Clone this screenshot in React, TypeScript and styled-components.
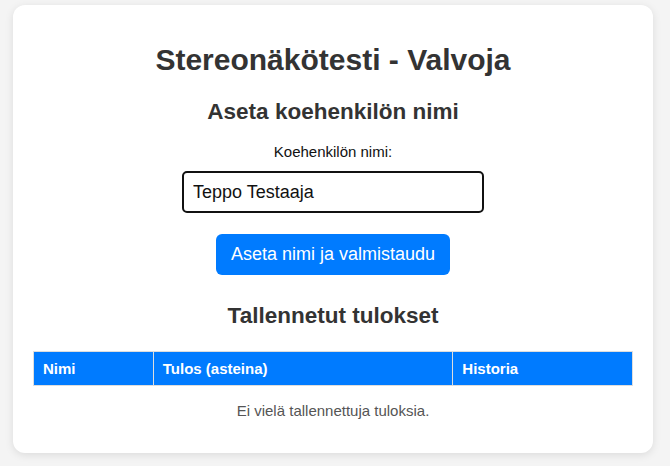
import styled, {createGlobalStyle} from 'styled-components';

const GlobalStyle = createGlobalStyle`
    html, body {
        margin: 0;
        padding: 0;
        background: #f4f4f4;
        font-family: "Liberation Sans", Arial, sans-serif;
        font-size: 15px;
        color: #333;
    }
`

const Page = styled.div`
    padding: 5px 0 13px 13px;
`

const Card = styled.div`
    width: 640px;
    box-sizing: border-box;
    padding: 20px;
    background: #fff;
    border-radius: 12px;
    box-shadow: 0 2px 8px rgba(0, 0, 0, 0.1);
    text-align: center;
`

const Title = styled.h1`
    font-size: 30px;
    margin: 18px 0 22px;
    color: #333;
`

const SubTitle = styled.h2<{$top?: number; $bottom?: number}>`
    font-size: 22.5px;
    margin: ${p => p.$top ?? 0}px 0 ${p => p.$bottom ?? 18}px;
    color: #333;
`

const Label = styled.label`
    display: block;
    font-size: 15px;
    color: #111;
    margin-bottom: 11px;
`

const NameInput = styled.input`
    display: block;
    margin: 0 auto 21px;
    width: 302px;
    height: 42px;
    box-sizing: border-box;
    padding: 0 9px;
    border: 2px solid #111;
    border-radius: 5px;
    font-family: "Liberation Sans", Arial, sans-serif;
    font-size: 18px;
    color: #111;
    outline: none;
    caret-color: #000;
`

const PrimaryButton = styled.button`
    width: 234px;
    height: 41px;
    border: none;
    border-radius: 6px;
    background: #007bff;
    color: #fff;
    font-family: "Liberation Sans", Arial, sans-serif;
    font-size: 18px;
    cursor: pointer;
`

const ResultTable = styled.table`
    width: 100%;
    border-collapse: collapse;
`

const HeadCell = styled.th<{$w: string}>`
    width: ${p => p.$w};
    height: 34px;
    box-sizing: border-box;
    padding: 0 9px;
    background: #007bff;
    color: #fff;
    border: 1px solid #ddd;
    text-align: left;
    font-size: 15px;
    font-weight: bold;
`

const EmptyNote = styled.p`
    margin: 16px 0 14px;
    font-size: 15px;
    color: #555;
`

export default function App() {
    return <Page>
        <GlobalStyle/>
        <Card>
            <Title>Stereonäkötesti - Valvoja</Title>
            <SubTitle>Aseta koehenkilön nimi</SubTitle>
            <Label htmlFor="name">Koehenkilön nimi:</Label>
            <NameInput id="name" defaultValue="Teppo Testaaja" autoFocus/>
            <PrimaryButton>Aseta nimi ja valmistaudu</PrimaryButton>
            <SubTitle $top={28} $bottom={22}>Tallennetut tulokset</SubTitle>
            <ResultTable>
                <thead>
                <tr>
                    <HeadCell $w="20%">Nimi</HeadCell>
                    <HeadCell $w="50%">Tulos (asteina)</HeadCell>
                    <HeadCell $w="30%">Historia</HeadCell>
                </tr>
                </thead>
            </ResultTable>
            <EmptyNote>Ei vielä tallennettuja tuloksia.</EmptyNote>
        </Card>
    </Page>
}
